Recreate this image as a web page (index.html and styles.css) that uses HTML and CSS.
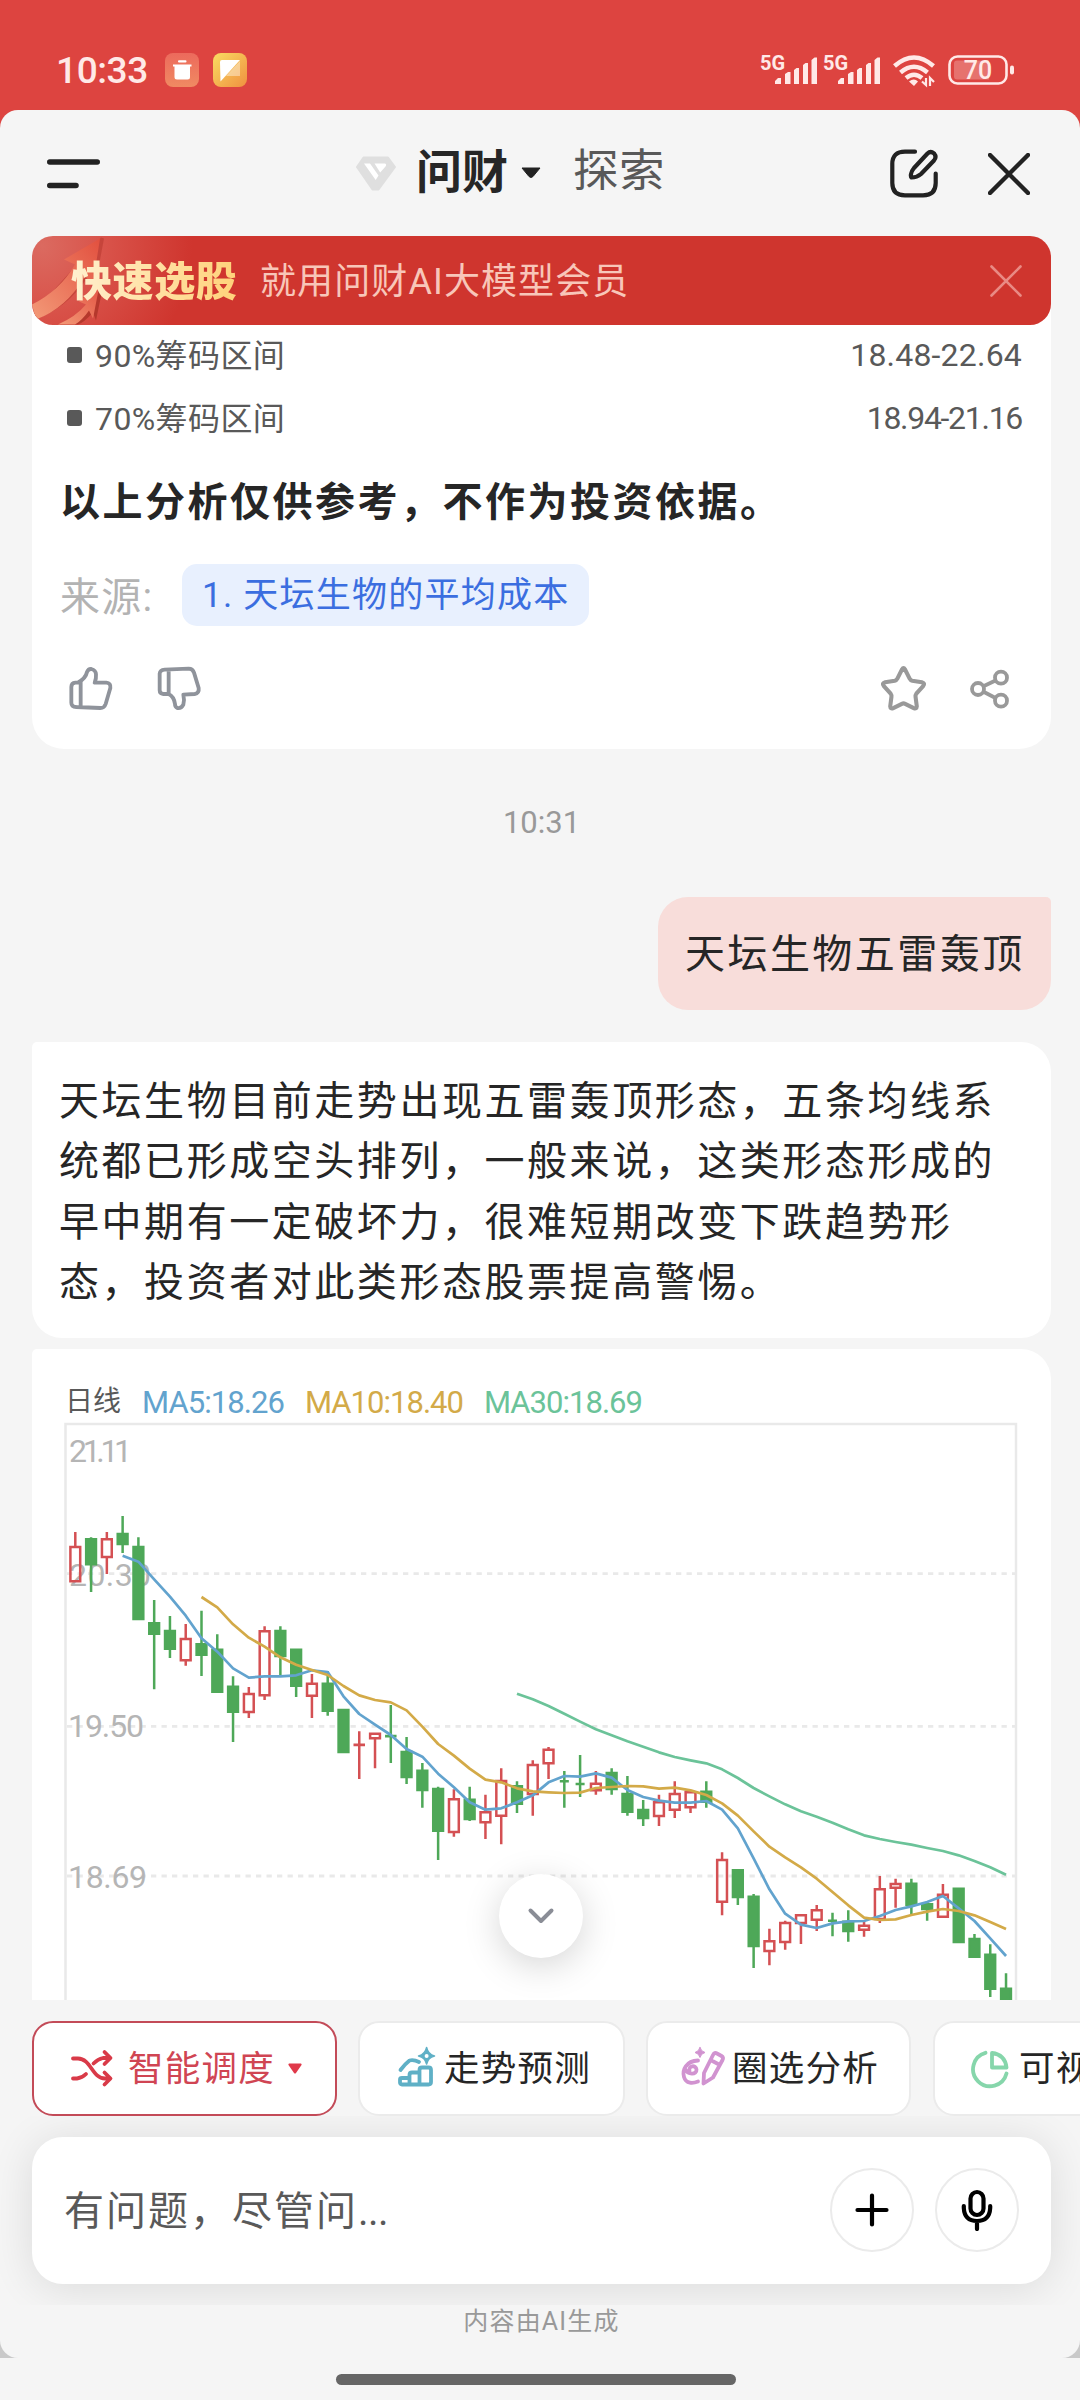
FILE: index.html
```html
<!DOCTYPE html>
<html lang="zh-CN">
<head>
<meta charset="utf-8">
<title>问财</title>
<link rel="stylesheet" href="styles.css">
</head>
<body>
<div class="statusbar">
  <span class="clock">10:33</span>
  <svg class="note-icon" width="34" height="34" viewBox="0 0 34 34"><defs><linearGradient id="ga" x1="0" y1="0" x2="0" y2="1"><stop offset="0" stop-color="#ec6a5c"/><stop offset="1" stop-color="#f08a62"/></linearGradient></defs><rect width="34" height="34" rx="8" fill="url(#ga)"/><path d="M8 11.500H26.500V13.500H25v10.500q0 2.500-2.500 2.500H12q-2.500 0-2.500-2.500V13.500H8z" fill="#fff"/><rect x="13" y="7.300" width="8.500" height="2.200" rx="1" fill="#fff"/></svg>
  <svg class="note-icon" width="34" height="34" viewBox="0 0 34 34"><defs><linearGradient id="gb" x1="0" y1="0" x2="1" y2="1"><stop offset="0" stop-color="#f9dc62"/><stop offset="1" stop-color="#f09040"/></linearGradient></defs><rect width="34" height="34" rx="8" fill="url(#gb)"/><path d="M27 8V23H13z" fill="#fff" fill-opacity=".4"/><path d="M7 9q0-2 2-2H27L7.500 28.500z" fill="#fff"/></svg>
  <div class="radios">
    <svg width="57" height="34" viewBox="0 0 57 34"><text class="net" x="0" y="17">5G</text><path d="M15 31v-3l3-3h3v6zM25 31V21l3-2h2.500v12zM34 31V17l2.500-2H39v16zM43 31V12l2.500-2H48v21zM51.500 31V7l3-2.500H57V31z"/></svg>
    <svg width="57" height="34" viewBox="0 0 57 34"><text class="net" x="0" y="17">5G</text><path d="M15 31v-3l3-3h3v6zM25 31V21l3-2h2.500v12zM34 31V17l2.500-2H39v16zM43 31V12l2.500-2H48v21zM51.500 31V7l3-2.500H57V31z"/></svg>
    <svg class="wifi" width="44" height="34" viewBox="0 0 44 34"><path d="M2.500 13Q22 -4 41.500 13M8.500 19.500Q22 8 35.500 19.500M14 25Q22 18.500 30 25" fill="none" stroke="#ffe9e7" stroke-width="4.500"/><path d="M17 28.500q5-4 9 0L22 33z"/><path d="M34 25v7l-4-3.500M38 33v-8l4 4" fill="none" stroke="#ffe9e7" stroke-width="2.200"/></svg>
    <svg class="battery" width="67" height="30" viewBox="0 0 67 30"><rect x="1.500" y="1.500" width="57" height="27" rx="8" fill="none" stroke="#ffe9e7" stroke-width="2.600"/><path d="M9 5.500H41V24.500H9q-3 0-3-3v-13q0-3 3-3z" fill-opacity=".28"/><rect x="62" y="10.500" width="4" height="9" rx="2"/><text x="30" y="23.500" text-anchor="middle">70</text></svg>
  </div>
</div>

<div class="backdrop">
<main class="sheet">
  <header class="topbar">
    <svg class="menu" width="53" height="30" viewBox="0 0 53 30"><path d="M2.800 3H50.200M2.800 26.500H29" stroke="#222" stroke-width="5.600" stroke-linecap="round"/></svg>
    <svg class="vip" width="41" height="36" viewBox="0 0 41 36"><path d="M7.500 1.500H32l7 9.500-16.500 22.500h-6L1 11z" fill="#dfdfdf" stroke="#dfdfdf" stroke-width="2" stroke-linejoin="round"/><path d="M8 7.500h6l8.500 12-2.800 4.500zM18.500 7.500H29q2 1 .5 3l-5.300 6z" fill="#fff"/></svg>
    <h1 class="tab-on">问财</h1>
    <svg class="caret" width="22" height="12" viewBox="0 0 22 12"><path d="M2 1H20L13 9.500q-2 2-4 0z" fill="#222" stroke="#222"/></svg>
    <span class="tab-off">探索</span>
    <svg class="compose" width="52" height="52" viewBox="0 0 52 52"><path d="M27 3.700H17Q4.300 3.700 4.300 16V35Q4.300 47.300 17 47.300H35Q47.700 47.300 47.700 35V25.500M23.500 29.500Q22.500 29 23 26Q23.500 23 26 20L39.500 5.500Q42.500 2.600 46 5.300Q49 9 46 12.500L33 26Q29 29.500 23.500 29.500Z"/></svg>
    <svg class="close" width="42" height="42" viewBox="0 0 42 42"><path d="M2 2L40 40M40 2L2 40"/></svg>
  </header>

  <section class="chat">
    <div class="banner">
      <svg class="rise" width="90" height="89" viewBox="0 0 90 88"><defs><linearGradient id="gc" x1="0" y1="1" x2="1" y2="0"><stop offset="0" stop-color="#f39a78"/><stop offset="1" stop-color="#e2503f"/></linearGradient></defs><path d="M28 88Q46 80 57 68L50 62L72 45L64 84L61 76Q52 86 46 88Z" fill="#b5382c"/><path d="M0 84Q36 72 56 40L63 50L72 2L69 1L0 78Z" fill="#b93a30" opacity=".6"/><path d="M0 68Q28 54 43 28L32 23L68 2L61 47L53 40Q34 72 4 83Z" fill="url(#gc)"/><path d="M26 88Q44 80 54 68L47 65L68 46L61 82L57 74Q50 84 43 88Z" fill="url(#gc)"/></svg>
      <strong>快速选股</strong>
      <span>就用问财AI大模型会员</span>
      <svg class="dismiss" width="32" height="32" viewBox="0 0 32 32"><path d="M1.500 1.500L30.500 30.500M30.500 1.500L1.500 30.500"/></svg>
    </div>

    <article class="card card-first">
      <div class="stat"><i></i><span>90%筹码区间</span><b>18.48-22.64</b></div>
      <div class="stat"><i></i><span>70%筹码区间</span><b class="tight">18.94-21.16</b></div>
      <p class="disclaimer">以上分析仅供参考，不作为投资依据。</p>
      <div class="source"><span>来源:</span><a>1. 天坛生物的平均成本</a></div>
      <div class="actions">
        <svg width="46" height="45.330" viewBox="125 1312 138 136"><path class="thumb" d="M135 1375Q135 1363 147 1362H154Q178 1350 182 1330Q186 1320 195 1321Q208 1324 209 1337Q210 1350 205 1362H240Q254 1363 252 1378L238 1426Q234 1438 222 1438L150 1435Q135 1434 135 1422ZM163 1360V1435"/></svg>
        <svg width="46" height="45.330" viewBox="392 1312 138 136"><path class="thumb" d="M403 1385V1335Q404 1324 418 1323L490 1320Q502 1320 506 1332L520 1378Q522 1394 508 1396L474 1398Q478 1415 474 1428Q468 1440 456 1438Q449 1435 449 1426Q446 1404 430 1396H414Q403 1395 403 1385ZM430 1322V1396"/></svg>
        <svg class="star" width="49" height="49" viewBox="0 0 24 24"><path d="M11.300 2.600Q12 1.400 12.700 2.600L15 7.200Q15.400 8 16.300 8.200L21 8.900Q22.800 9.400 21.600 10.900L18.300 14.500Q17.800 15.200 17.900 16L18.500 20.700Q18.400 22.200 17 21.600L12.800 19.500Q12 19.100 11.200 19.500L7 21.600Q5.600 22.200 5.500 20.700L6.100 16Q6.200 15.200 5.700 14.500L2.400 10.900Q1.200 9.400 3 8.900L7.700 8.200Q8.600 8 9 7.200Z"/></svg>
        <svg class="share" width="40" height="40" viewBox="0 0 40 40"><circle cx="8" cy="20" r="6"/><circle cx="31" cy="8.700" r="6"/><circle cx="31" cy="31.700" r="6"/><path d="M14 17L25.500 11.500M14 23L25.500 29"/></svg>
      </div>
    </article>

    <time class="stamp">10:31</time>
    <div class="mine">天坛生物五雷轰顶</div>
    <div class="card reply">天坛生物目前走势出现五雷轰顶形态，五条均线系<br>统都已形成空头排列，一般来说，这类形态形成的<br>早中期有一定破坏力，很难短期改变下跌趋势形<br>态，投资者对此类形态股票提高警惕。</div>

    <div class="card chart">
      <svg width="1019" height="651" viewBox="32 1349 1019 651">
        <text x="65" y="1411" class="lg-day" textLength="56">日线</text>
        <text x="142" y="1412.500" class="lg ma5" textLength="143">MA5:18.26</text>
        <text x="305" y="1412.500" class="lg ma10" textLength="159">MA10:18.40</text>
        <text x="484" y="1412.500" class="lg ma30" textLength="159">MA30:18.69</text>
        <path class="frame" d="M65.500 2000V1424H1016V2000"/>
        <path class="grid" d="M67 1573.700H1015M67 1726.300H1015M67 1876H1015"/>
        <text x="69" y="1461.500" class="axis" textLength="63">21.11</text>
        <text x="69" y="1585.500" class="axis" textLength="82">20.30</text>
        <text x="68" y="1737" class="axis" textLength="76">19.50</text>
        <text x="68" y="1888" class="axis" textLength="79">18.69</text>
        <g id="plot"></g>
      </svg>
    </div>
    <button class="to-bottom" aria-label="到底部"><svg width="28" height="18" viewBox="0 0 28 18"><path d="M3.500 3.500L14 14L24.500 3.500"/></svg></button>
  </section>

  <nav class="chips">
    <div class="chip chip-on">
      <svg width="44" height="42" viewBox="0 0 44 42" stroke="#d93a48"><path d="M3 10.500H8C21 10.500 22 30.500 35 30.500H40M34.500 24.500L40.500 30.500L34.500 36.500M3 30.500H7Q12 30 16 26M23.500 15.500Q28 11 33 10H40M34.500 4L40.500 10L34.500 16"/></svg>
      <span>智能调度</span>
      <svg class="drop" width="14" height="11" viewBox="0 0 14 11"><path d="M1 .5H13q1 .5.500 1.500L8 10q-1 1-2 0L.5 2Q0 1 1 .5z" fill="#e0394a"/></svg>
    </div>
    <div class="chip chip-b">
      <svg width="42" height="42" viewBox="0 0 42 42" stroke="#5fb0c6"><path d="M3.500 24Q8 18 12.500 14.500Q17 13.500 22 16M3 33.500Q3 32 5 32H12.500V38.500H5Q3 38.500 3 36.500ZM12.500 38.500V29Q12.500 26.500 15 26.500H22.500V38.500ZM22.500 38.500V24Q22.500 21.500 25 21.500H31.500Q34 21.500 34 24V36Q34 38.500 31.500 38.500Z"/><path d="M29.600 1.500Q31 8.500 37.500 10Q31 11.500 29.600 18Q28.200 11.500 21.500 10Q28.200 8.500 29.600 1.500Z" fill="#5fb0c6" stroke-width="1.500"/><circle cx="29.600" cy="10" r="2" fill="#fff" stroke="none"/></svg>
      <span>走势预测</span>
    </div>
    <div class="chip chip-c">
      <svg width="46" height="42" viewBox="0 0 46 42" stroke="#d193d0"><path d="M18 14.500C6 15 2 24 4 31C6 38 13 37.500 18 35.500M5 23C8 29.500 17 28.500 16.500 23.500C16 18.500 8 19.500 9.500 25M23.500 37.500L24 27L33 9Q34.500 6 37 7.500L41.500 10Q44 11.500 42.500 14L33 31.500ZM31.500 14.500L39 18.500"/><path d="M20 1.500Q21 5.500 25 6.500Q21 7.500 20 11.500Q19 7.500 15 6.500Q19 5.500 20 1.500Z" fill="#d193d0" stroke-width="1"/></svg>
      <span>圈选分析</span>
    </div>
    <div class="chip chip-d">
      <svg width="40" height="40" viewBox="0 0 40 40" stroke="#86d6ab"><path d="M15.500 3.800A17 17 0 1 0 36.500 24.500M22 4Q35 5.500 36.500 18.500H22Z"/></svg>
      <span>可视</span>
    </div>
  </nav>

  <section class="composer">
    <div class="inputbox">
      <span>有问题，尽管问<em>...</em></span>
      <button class="round" aria-label="添加"><svg width="34" height="34" viewBox="0 0 34 34"><path d="M17 2.500V31.500M2.500 17H31.500"/></svg></button>
      <button class="round" aria-label="语音"><svg width="34" height="42" viewBox="0 0 34 42"><rect x="10.500" y="3" width="13" height="23" rx="6.500"/><path d="M3.800 17V19Q4.500 32 17 32Q29.500 32 30.200 19V17M17 32V40"/></svg></button>
    </div>
  </section>
  <footer>内容由AI生成</footer>
</main>
</div>
<div class="gesture"><i></i></div>
<script src="chart.js"></script>
</body>
</html>
```
FILE: styles.css
```css
* { box-sizing: border-box; }
body {
  margin: 0; width: 1080px; height: 2400px; overflow: hidden;
  display: flex; flex-direction: column;
  background: #f5f5f5; color: #262626;
  font-family: Roboto, "Noto Sans CJK SC", sans-serif;
}
svg { display: block; flex: none; }
button { border: 0; padding: 0; background: #fff; display: flex; align-items: center; justify-content: center; }

.statusbar { height: 110px; background: #dd4440; display: flex; align-items: center; padding: 30px 65px 0 56px; color: #ffe9e7; }
.clock { width: 109px; font-size: 37px; font-weight: 500; line-height: 40px; letter-spacing: -.4px; margin-top: 1px; }
.note-icon { margin-right: 14px; }
.radios { margin-left: auto; display: flex; align-items: center; gap: 6px; fill: #ffe9e7; }
.radios svg { overflow: visible; }
.net { font-size: 20px; font-weight: 700; }
.wifi { margin-left: 6px; }
.battery { margin-left: 6px; font-size: 25px; font-weight: 500; }

.backdrop { background: linear-gradient(#dd4440 50%, #c9c9c9 50%); height: 2248px; }
.sheet { height: 2248px; background: #f5f5f5; border-radius: 18px; overflow: hidden; display: flex; flex-direction: column; }

.topbar { height: 126px; flex: none; display: flex; align-items: center; padding: 0 50px 0 47px; }
.menu { margin-top: 1px; }
.vip { margin: 2px 19px 0 256px; }
.tab-on { margin: -2px 0 0; width: 94px; font-size: 46px; line-height: 60px; font-weight: 700; white-space: nowrap; }
.caret { margin: -1px 0 0 10px; }
.tab-off { margin: -2px 0 0 31px; width: 92px; font-size: 45.5px; letter-spacing: .6px; line-height: 60px; color: #595959; white-space: nowrap; }
.compose { margin: 1px 0 0 223px; fill: none; stroke: #222; stroke-width: 4.200; stroke-linecap: round; stroke-linejoin: round; }
.close { margin-left: auto; margin-top: 1px; stroke: #222; stroke-width: 4.400; stroke-linecap: round; }

.chat { height: 1764px; flex: none; padding: 0 29px 0 32px; overflow: hidden; position: relative; display: flex; flex-direction: column; }
.banner {
  position: relative; z-index: 1; flex: none; height: 89px; border-radius: 21px; overflow: hidden;
  background: radial-gradient(circle at 10px 10px, #db6a60 0, #d9544b 60px, #cf352e 150px);
  display: flex; align-items: center; padding: 0 29px 0 0;
}
.rise { margin-right: -51px; }
.banner strong {
  font-size: 41px; letter-spacing: .6px; line-height: 56px; font-weight: 900; width: 189px; margin-top: 3px;
  background: linear-gradient(90deg, #fff0cf, #ffd27a 165px); -webkit-background-clip: text; background-clip: text; color: transparent;
  position: relative;
}
.banner span { font-size: 36px; letter-spacing: 1.100px; line-height: 50px; color: #f8c6b9; margin-top: 3px; }
.dismiss { margin-left: auto; stroke: #e98a84; stroke-width: 2.600; stroke-linecap: round; }

.card { background: #fff; flex: none; }
.card-first { margin-top: -31px; height: 455px; padding: 29.500px 29px 0 28px; border-radius: 0 0 32px 32px; color: #595959; }
.stat { display: flex; align-items: center; height: 62.700px; font-size: 32px; }
.stat i { width: 15px; height: 16px; border-radius: 3px; background: #595959; margin: 0 13px 0 7px; }
.stat span { font-size: 32px; letter-spacing: .4px; margin-top: -3px; }
.stat b { margin-left: auto; font-weight: 400; letter-spacing: .2px; margin-top: 1px; }
.stat .tight { letter-spacing: -1.300px; }
.disclaimer { margin: 19.500px 0 0; font-size: 40px; letter-spacing: 2.500px; line-height: 70px; font-weight: 700; color: #262626; white-space: nowrap; }
.source { display: flex; align-items: center; margin-top: 26px; height: 62px; }
.source span { width: 122px; font-size: 40px; letter-spacing: 1.200px; color: #b3b3b3; margin-top: -2px; }
.source a { width: 407px; height: 62px; line-height: 63px; border-radius: 15px; padding-left: 20px; background: #e8f0fe; color: #3b6ee0; font-size: 35px; letter-spacing: 1.250px; white-space: nowrap; }
.actions { display: flex; align-items: center; height: 51px; margin-top: 37px; padding: 0 12px 0 8px; gap: 42px; }
.thumb { fill: none; stroke: #8f939b; stroke-width: 11.500; stroke-linejoin: round; }
.star { margin-left: auto; fill: none; stroke: #999; stroke-width: 2; }
.share { fill: none; stroke: #999; stroke-width: 3.800; }

.stamp { align-self: center; height: 148px; line-height: 148px; font-size: 31px; color: #999; }
.mine { align-self: flex-end; width: 393px; height: 113px; line-height: 116px; padding-left: 27px; border-radius: 30px 5px 30px 30px; background: #f8ddda; font-size: 40px; letter-spacing: 2.450px; white-space: nowrap; }
.reply { margin-top: 32px; height: 296px; padding: 30px 0 0 27px; border-radius: 5px 30px 30px 30px; font-size: 40px; letter-spacing: 2.550px; line-height: 60.300px; white-space: nowrap; }
.chart { margin-top: 11px; height: 651px; border-radius: 5px 30px 0 0; overflow: hidden; }
.lg { font-size: 31px; }
.lg-day { font-size: 28px; fill: #595959; }
.ma5 { fill: #62a3ce; }
.ma10 { fill: #d3aa48; }
.ma30 { fill: #6bc399; }
.frame { fill: none; stroke: #e9e9e9; stroke-width: 2.500; }
.grid { stroke: #e9e9e9; stroke-width: 2.800; stroke-dasharray: 5.300 5.200; }
.axis { font-size: 32px; fill: #b5b5b5; }
.up { fill: none; stroke: #d45053; stroke-width: 2.500; }
.down { fill: #4ea858; stroke: #4ea858; stroke-width: 2.500; }
.line5, .line10, .line30 { fill: none; stroke-width: 2.700; stroke-linejoin: round; }
.line5 { stroke: #62a3ce; }
.line10 { stroke: #d3aa48; }
.line30 { stroke: #6bc399; }
.to-bottom { position: absolute; left: 499px; top: 1638px; width: 84px; height: 84px; border-radius: 50%; box-shadow: 0 8px 36px rgba(0,0,0,.17); }
.to-bottom path { fill: none; stroke: #8a8d96; stroke-width: 4; stroke-linecap: round; stroke-linejoin: round; }

.chips { height: 116px; flex: none; padding: 21px 0 0 32px; display: flex; gap: 22px; overflow: hidden; }
.chip { flex: none; height: 95px; border: 2px solid #ebebeb; border-radius: 21px; background: #fff; display: flex; align-items: center; font-size: 35.500px; letter-spacing: 1.250px; white-space: nowrap; line-height: 48px; }
.chip span { margin-top: 0; }
.chip svg { fill: none; stroke-width: 3.800; stroke-linecap: round; stroke-linejoin: round; }
.chip-on { width: 305px; border-color: #c34b58; color: #d04553; padding-left: 36px; }
.chip-on span { margin-left: 14px; }
.chip-on .drop { margin-left: 13px; margin-top: -1px; }
.chip-b { width: 267px; padding-left: 37px; margin-left: -1px; }
.chip-b span { margin-left: 5px; }
.chip-b svg, .chip-c svg { margin-top: -3px; }
.chip-c { width: 265px; padding-left: 32px; margin-left: -1px; }
.chip-c span { margin-left: 6px; }
.chip-d { width: 264px; padding-left: 35px; }
.chip-d span { margin-left: 9px; }

.composer { height: 189px; flex: none; overflow: hidden; padding: 21px 29px 0 32px; }
.inputbox { height: 147px; border-radius: 31px; background: #fff; box-shadow: 0 4px 44px rgba(0,0,0,.11); display: flex; align-items: center; padding: 0 32px 1px 32px; }
.inputbox span { margin: -4px auto 0 0; font-size: 40px; letter-spacing: 2px; color: #595959; }
.inputbox em { font-style: normal; letter-spacing: -.5px; }
.round { width: 84px; height: 84px; border: 2px solid #ebebeb; border-radius: 50%; margin-left: 21px; }
.round svg { fill: none; stroke: #000; stroke-width: 4.200; stroke-linecap: round; }

footer { text-align: center; height: 53px; line-height: 33px; padding-left: 3px; font-size: 25px; letter-spacing: 1.200px; color: #999; }

.gesture { height: 42px; display: flex; justify-content: center; padding-top: 16px; }
.gesture i { width: 400px; height: 11px; border-radius: 6px; background: #666; margin-right: 9px; }
```
FILE: chart.js
```js
// Daily candles: direction, high, body top, body bottom, low (thirds of a pixel below y = 1370).
const candles = `R 486 528 637 637|G 502 505 586 666|R 486 505 564 612|G 438 489 525 549|G 502 528 750 750|G 690 757 794 958
G 738 780 839 864|R 762 804 874 887|G 722 820 857 918|G 793 836 968 968|G 919 947 1028 1116|R 951 969 1029 1044
R 769 781 979 990|G 769 780 861 918|G 836 836 950 981|R 912 938 980 1044|G 903 938 1025 1037|G 1017 1017 1149 1149
R 1084 1121 1128 1227|R 1088 1088 1108 1195|G 1005 1095 1102 1179|G 1101 1143 1224 1242|G 1179 1199 1263 1313|G 1250 1254 1385 1470
R 1258 1285 1389 1400|G 1250 1286 1350 1353|R 1274 1324 1360 1407|R 1195 1230 1340 1423|G 1234 1246 1304 1329|R 1171 1182 1275 1337
R 1131 1136 1183 1227|G 1203 1231 1237 1313|G 1155 1239 1245 1281|R 1203 1238 1264 1274|G 1195 1206 1260 1274|G 1218 1269 1328 1337
G 1290 1317 1347 1368|R 1274 1294 1341 1368|R 1234 1269 1322 1344|R 1260 1264 1315 1329|G 1234 1262 1298 1313|R 1447 1467 1598 1636
G 1498 1498 1584 1605|G 1572 1577 1731 1794|R 1676 1711 1746 1786|R 1652 1656 1719 1739|R 1633 1633 1662 1722|R 1605 1618 1652 1683
G 1628 1649 1655 1699|G 1621 1652 1686 1715|R 1655 1664 1682 1700|R 1518 1555 1650 1659|R 1526 1539 1556 1613|G 1526 1538 1607 1633
G 1595 1600 1620 1652|R 1542 1571 1643 1643|G 1553 1553 1719 1719|G 1692 1704 1763 1763|G 1723 1751 1859 1881|G 1810 1853 1930 1930`
  .split(/[|\n]/).map(s => s.trim().split(' '));

// Moving averages: index of the first candle, then one value per candle.
const averages = {
  line30: [28, 971, 988, 1008, 1031, 1055, 1078, 1096, 1114, 1130, 1147, 1161, 1171, 1180, 1198, 1224, 1254, 1279, 1303, 1324, 1340, 1358, 1378, 1396, 1407, 1416, 1424, 1434, 1443, 1456, 1473, 1492, 1514],
  line5: [3, 557, 575, 628, 680, 737, 805, 845, 895, 923, 919, 919, 916, 901, 906, 979, 1032, 1064, 1095, 1137, 1160, 1211, 1252, 1297, 1319, 1315, 1297, 1276, 1237, 1218, 1220, 1210, 1223, 1260, 1281, 1292, 1298, 1298, 1293, 1319, 1375, 1465, 1558, 1631, 1664, 1674, 1660, 1654, 1653, 1638, 1620, 1609, 1596, 1578, 1615, 1653, 1705, 1758],
  line10: [8, 681, 712, 763, 803, 830, 862, 884, 900, 915, 948, 976, 990, 997, 1021, 1070, 1122, 1157, 1196, 1229, 1237, 1255, 1264, 1267, 1269, 1268, 1254, 1251, 1248, 1249, 1256, 1253, 1261, 1275, 1300, 1337, 1384, 1430, 1462, 1492, 1526, 1566, 1606, 1643, 1650, 1648, 1635, 1625, 1617, 1623, 1636, 1656, 1677]
};

const x = i => 75.3 + 15.775 * i;
const y = v => 1370 + v / 3;
const plot = document.getElementById('plot');

function add(cls, d) {
  const p = document.createElementNS('http://www.w3.org/2000/svg', 'path');
  p.setAttribute('class', cls);
  p.setAttribute('d', d);
  plot.appendChild(p);
}

candles.forEach(([dir, high, top, bottom, low], i) => {
  const cx = x(i);
  const t = Math.min(y(+top) + 1, y(+bottom) - 1);
  const b = Math.max(y(+bottom) - 1, t);
  const half = b - t < 1 ? 4.5 : 4.9;
  add(dir === 'R' ? 'up' : 'down',
    `M${cx} ${y(+high)}V${t}M${cx - half} ${t}H${cx + half}V${b}H${cx - half}ZM${cx} ${b}V${Math.max(y(+low), b)}`);
});

for (const [cls, [start, ...values]] of Object.entries(averages)) {
  add(cls, 'M' + values.map((v, k) => `${x(start + k)} ${y(v)}`).join('L'));
}
```
